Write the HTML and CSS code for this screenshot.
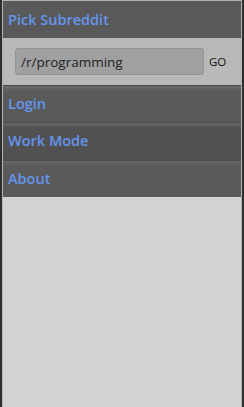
FILE: index.html
```html
<!DOCTYPE html>
<html>
<head>
	<meta charset="utf-8">
	<title>Menu</title>
	<link rel="stylesheet" href="styles.css">
</head>
<body>
<div class="frame">
	<div class="inner">
		<div class="head">Pick Subreddit</div>
		<form class="pick" action="#" onsubmit="return false;">
			<input class="sub" type="text" value="/r/programming" name="sub">
			<button class="go" type="submit">GO</button>
		</form>
		<div class="item">Login</div>
		<div class="item dim">Work Mode</div>
		<div class="item">About</div>
	</div>
</div>
</body>
</html>
```

FILE: styles.css
```css
html, body {margin: 0; height: 100%;}
body {font-family: "Open Sans", "Noto Sans", sans-serif; background: #2e2e2e;}
.frame {height: 100%; box-sizing: border-box; border-left: 2px solid #2e2e2e; border-right: 2px solid #2e2e2e;}
.inner {height: 100%; box-sizing: border-box; background: #d3d3d3; border: 1px solid #b4b4b4; border-bottom: 0;}
.head {height: 37px; line-height: 38px; padding-left: 5px; background: #595959; color: #6495ed; font-size: 14.5px; font-weight: 600;}
.pick {display: flex; align-items: center; height: 47px; margin: 0; padding: 0 0 0 12px; background: #b9b9b9;}
.sub {width: 189px; height: 27px; box-sizing: border-box; margin: 0; padding: 0 5px; border: 1px solid #939393; border-radius: 3px; background: #a0a0a0; color: #222; font-family: inherit; font-size: 13.5px; outline: none;}
.go {margin: 0 0 0 5px; padding: 0; border: 0; background: none; color: #111; font-family: inherit; font-size: 11.5px;}
.item {height: 36px; line-height: 36px; padding-left: 5px; color: #6495ed; font-size: 14.5px; font-weight: 600; background: linear-gradient(#6a6a6a, #5a5a5a 5px, #595959); border-top: 1px solid #4a4a4a;}
.item.dim {height: 37px; background: linear-gradient(#686868, #525252 5px, #505050);}
```
